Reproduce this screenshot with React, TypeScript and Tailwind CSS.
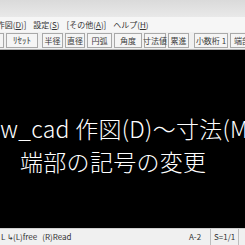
export default function App() {
  const btn =
    "shrink-0 h-[15px] flex items-center justify-center border border-[#a9a9a9] bg-[#f5f5f5] text-[8px] leading-none text-[#3a3a3a] whitespace-nowrap";
  return (
    <div className="w-[245px] h-[245px] overflow-hidden flex flex-col bg-[#f0f0f0] font-['Noto_Sans_CJK_JP',sans-serif]">
      {/* title area */}
      <div className="h-[17px] shrink-0 bg-gradient-to-b from-[#dadada] to-[#e9e9e9]" />
      {/* menu bar */}
      <div className="h-[15px] shrink-0 bg-[#f6f6f6] flex items-center text-[8px] leading-none text-[#333] whitespace-nowrap">
        <div className="ml-[-6px] flex gap-[7px]">
          <span>[作図(<span className="underline">D</span>)]</span>
          <span>設定(<span className="underline">S</span>)</span>
          <span>[その他(<span className="underline">A</span>)]</span>
          <span>ヘルプ(<span className="underline">H</span>)</span>
        </div>
      </div>
      {/* toolbar */}
      <div className="h-[18px] shrink-0 bg-[#f0f0f0] flex items-start pt-[1px] gap-[2px] border-b border-[#b0b0b0]">
        <div className={btn + " w-[10px] ml-[-6px]"} />
        <div className={btn + " w-[32px] text-[9px]"}>ﾘｾｯﾄ</div>
        <div className={btn + " w-[21px] ml-[2px]"}>半径</div>
        <div className={btn + " w-[20px]"}>直径</div>
        <div className={btn + " w-[25px]"}>円弧</div>
        <div className={btn + " w-[28px]"}>角度</div>
        <div className={btn + " w-[22px]"}>寸法値</div>
        <div className={btn + " w-[21px]"}>累進</div>
        <div className={btn + " w-[34px] ml-[3px]"}>小数桁 1</div>
        <div className={btn + " w-[40px] justify-start pl-[3px]"}>端部</div>
      </div>
      {/* canvas */}
      <div className="h-[178px] shrink-0 bg-black text-white text-[23px] font-light leading-[33px] tracking-[0.3px] pt-[62px] whitespace-nowrap">
        <div className="ml-[-6px]">jw_cad 作図(D)～寸法(M)</div>
        <div className="ml-[20px]">端部の記号の変更</div>
      </div>
      {/* status bar */}
      <div className="flex-1 flex items-center border-t border-[#cfcfcf] bg-[#f0f0f0] text-[8px] leading-none text-[#333] whitespace-nowrap">
        <span className="ml-[1px] w-[11px]">L ↳</span>
        <span className="ml-[1px]">(L)free</span>
        <span className="ml-[5px]">(R)Read</span>
        <span className="ml-auto flex items-stretch h-full">
          <span className="w-[24px] flex items-center justify-start pl-[3px]">A-2</span>
          <span className="w-[28px] border-l border-[#bdbdbd] flex items-center pl-[3px]">S=1/1</span>
          <span className="w-[7px] border-l border-[#bdbdbd]" />
        </span>
      </div>
    </div>
  );
}
